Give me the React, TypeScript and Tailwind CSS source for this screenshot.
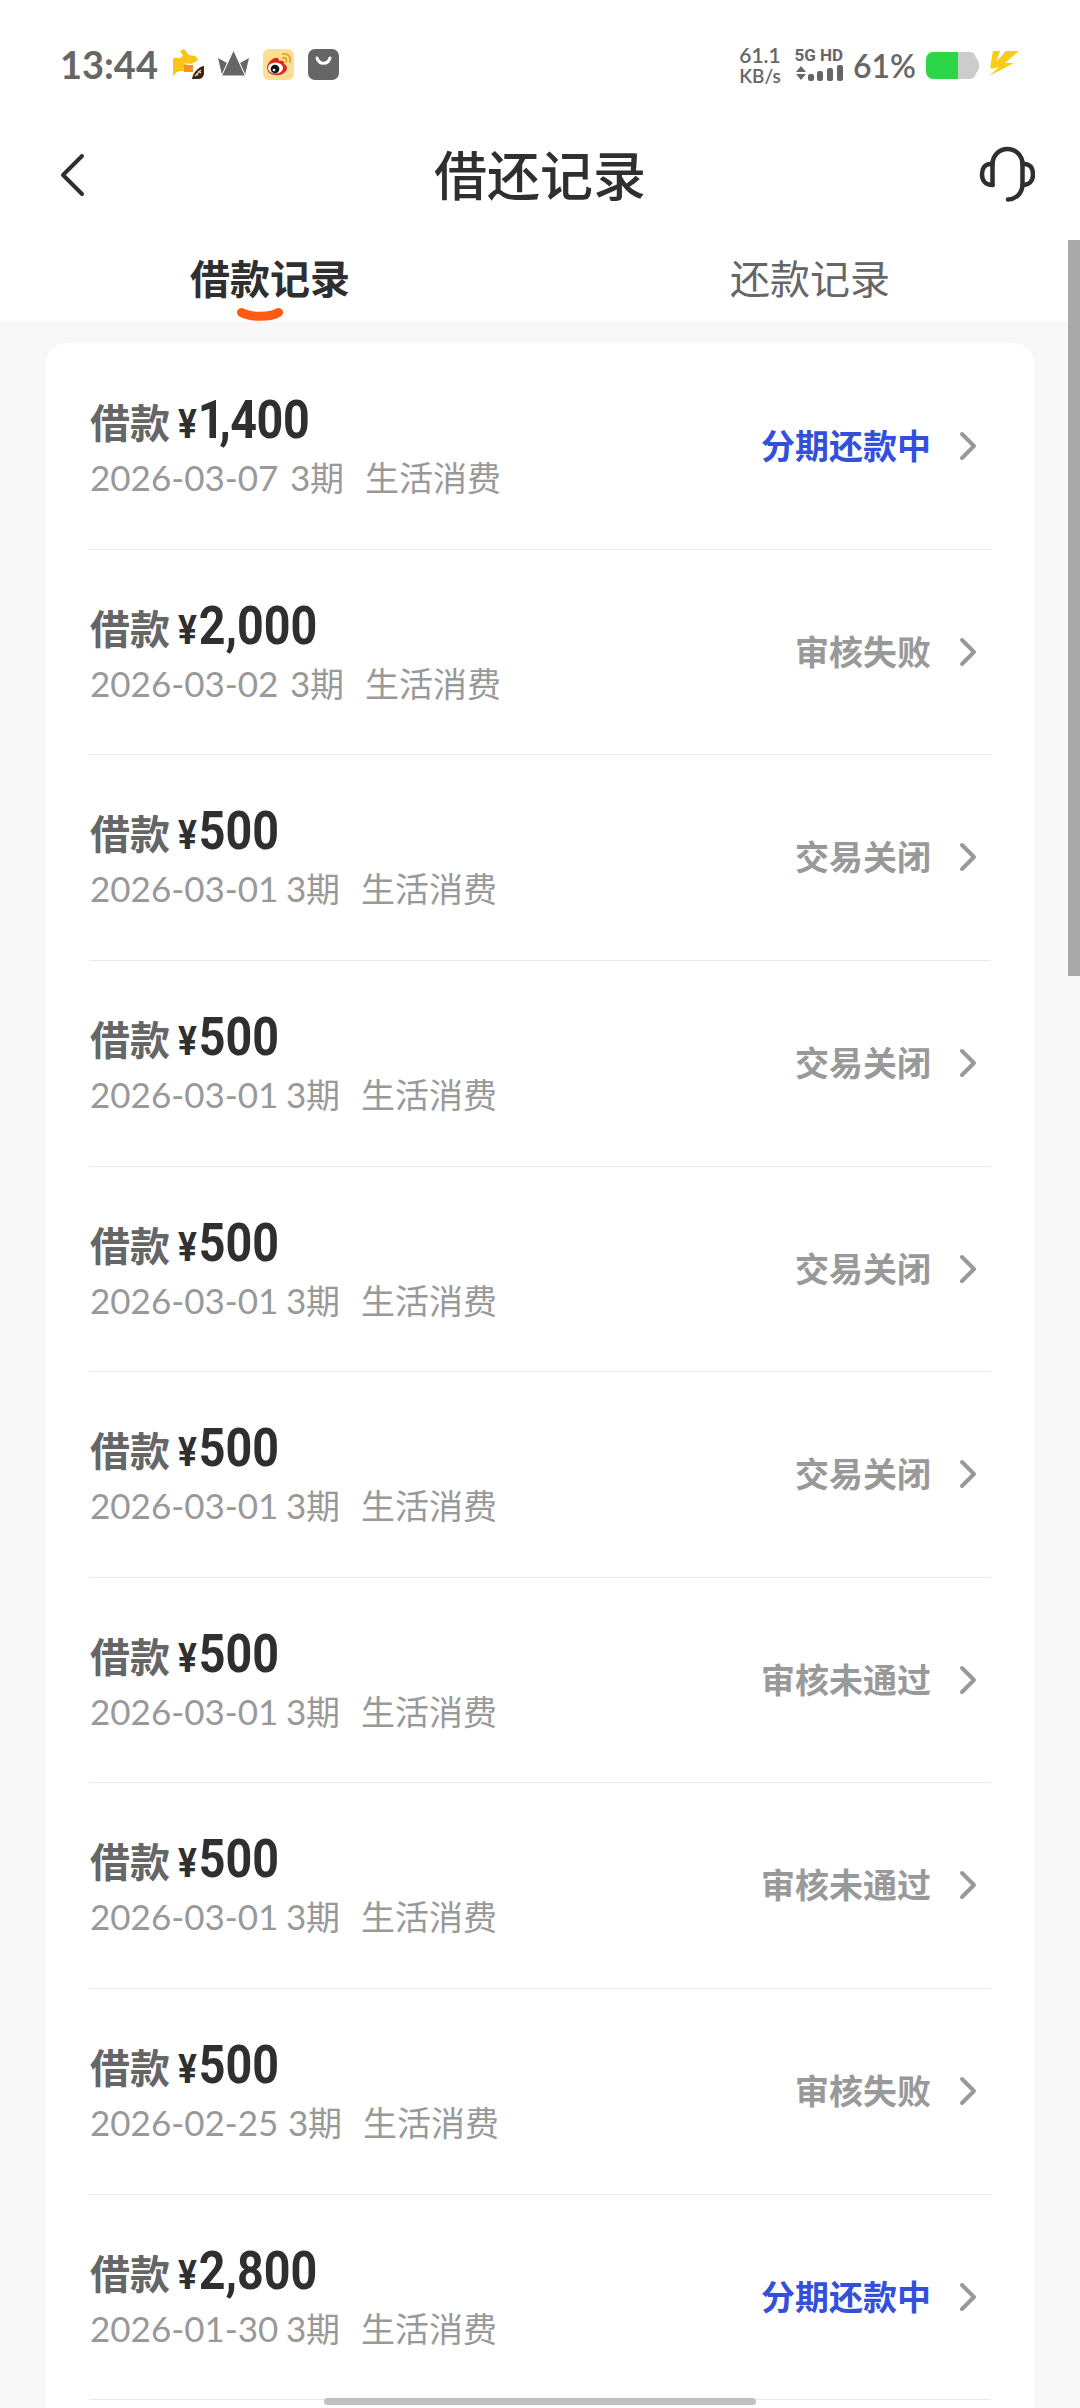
type LoanRecord = {
  amount: string;
  date: string;
  dateWidth: string;
  status: string;
  active?: boolean;
};

const records: LoanRecord[] = [
  { amount: "1,400", date: "2026-03-07", dateWidth: "w-[200px]", status: "分期还款中", active: true },
  { amount: "2,000", date: "2026-03-02", dateWidth: "w-[200px]", status: "审核失败" },
  { amount: "500", date: "2026-03-01", dateWidth: "w-[196px]", status: "交易关闭" },
  { amount: "500", date: "2026-03-01", dateWidth: "w-[196px]", status: "交易关闭" },
  { amount: "500", date: "2026-03-01", dateWidth: "w-[196px]", status: "交易关闭" },
  { amount: "500", date: "2026-03-01", dateWidth: "w-[196px]", status: "交易关闭" },
  { amount: "500", date: "2026-03-01", dateWidth: "w-[196px]", status: "审核未通过" },
  { amount: "500", date: "2026-03-01", dateWidth: "w-[196px]", status: "审核未通过" },
  { amount: "500", date: "2026-02-25", dateWidth: "w-[198px]", status: "审核失败" },
  { amount: "2,800", date: "2026-01-30", dateWidth: "w-[196px]", status: "分期还款中", active: true },
];

function StatusBar() {
  return (
    <div className="flex h-[130px] items-start justify-between bg-white pt-[42px] pr-[60px] pl-[60px] font-['Lato','Noto_Sans_CJK_SC',sans-serif] text-[#666]">
      <div className="flex h-11 items-center">
        <span className="w-[113px] text-[38px] leading-[44px] font-bold whitespace-nowrap">13:44</span>
        {/* delivery dog */}
        <svg width="31" height="31" viewBox="0 0 31 31">
          <path d="M0 9h7l3-2-3-5 4-2 5 6 6 1 3 3-1 2-6 3-7-1 4 2v6H8l-4 1-4 4z" fill="#fcc419" />
          <path d="M11 16h9v7h-9z" fill="#f9921e" />
          <path d="M31 17v8a6 6 0 0 1-6 5h-6c1-6 6-12 12-13z" fill="#3d2415" />
          <path d="M22 27l6-6M25 22l3 2M23 25l2 1" stroke="#e8c9a0" strokeWidth="1.4" />
        </svg>
        {/* crown */}
        <svg className="ml-[14px]" width="31" height="31" viewBox="0 0 31 31" fill="#666">
          <path d="M0 9l9 5-5 12zM31 9l-9 5 5 12z" />
          <path d="M15.500 1L27.500 27H3.500z" stroke="#fff" strokeWidth="1" />
        </svg>
        {/* weibo */}
        <svg className="ml-[14px]" width="31" height="31" viewBox="0 0 31 31">
          <rect width="31" height="31" rx="6" fill="#fddf94" />
          <path d="M4 18c1-5 7-10 10-9 2 0 2 2 2 3 3-1 6 0 5 3 4 2 4 6 0 9-5 4-17 3-17-6z" fill="#e1241c" />
          <ellipse cx="12.500" cy="19" rx="7.500" ry="5.500" fill="#fff" />
          <circle cx="12" cy="20" r="4.300" fill="#111" />
          <circle cx="11" cy="21" r="1.300" fill="#fff" />
          <path d="M20 9c3-1 4 1 3 4M20 5c6-1 8 4 7 8" fill="none" stroke="#f59c23" strokeWidth="1.900" strokeLinecap="round" />
        </svg>
        {/* shopping bag */}
        <svg className="ml-[14px]" width="31" height="31" viewBox="0 0 31 31">
          <rect width="31" height="31" rx="7" fill="#666" />
          <path d="M9 9c2 7 11 7 13 0" fill="none" stroke="#fff" strokeWidth="3" strokeLinecap="round" />
        </svg>
      </div>
      <div className="flex h-11 items-center">
        <div className="w-[46px] text-center font-semibold whitespace-nowrap">
          <div className="text-[21px] leading-[22px]">61.1</div>
          <div className="text-[19px] leading-[19px]">KB/s</div>
        </div>
        <div className="w-[60px]">
          <div className="text-right font-['Roboto'] text-[17px] leading-[17px] font-bold whitespace-nowrap">5G HD</div>
          <svg width="48" height="18" viewBox="0 0 48 18" fill="#666" className="ml-[12px]">
            <path d="M1 8l5-6 5 6zM1 10l5 6 5-6z" />
            <rect x="13" y="10" width="6" height="7" rx="2" />
            <rect x="22" y="7" width="6" height="10" rx="2" />
            <rect x="32" y="4" width="6" height="13" rx="2" />
            <rect x="42" y="1" width="6" height="16" rx="2" />
          </svg>
        </div>
        <span className="ml-[10px] w-[73px] pt-[4px] text-[32px] leading-[40px] font-semibold whitespace-nowrap">61%</span>
        <svg className="mt-[3px]" width="55" height="28" viewBox="0 0 55 28">
          <path d="M7 0h37a6 6 0 0 1 6 6c4 1 4 14 0 15a6 6 0 0 1-6 6H7z" fill="#ccc" />
          <path d="M32 0H7a7 7 0 0 0-7 7v13a7 7 0 0 0 7 7h25z" fill="#2bd748" />
        </svg>
        {/* fast charge bolt */}
        <svg className="ml-[7px]" width="32" height="26" viewBox="0 0 32 26" fill="#f8cd13">
          <path d="M5 0h7L8 11 18 0h13L17 12h9L1 25 11 16l-8 2z" />
          <path d="M5 0L2 17l6-6 4-11z" />
        </svg>
      </div>
    </div>
  );
}

function Header() {
  return (
    <header className="grid h-[90px] grid-cols-[1fr_auto_1fr] items-center bg-white pr-[45px] pl-[59px] text-[#2f2f2f]">
      <svg width="26" height="44" viewBox="0 0 26 44" fill="none">
        <path d="M23 3L4 22l19 19" stroke="currentColor" strokeWidth="4" strokeLinecap="round" strokeLinejoin="round" />
      </svg>
      <h1 className="pr-[14px] pb-[3px] text-[53px] leading-[87px] font-medium">借还记录</h1>
      <svg className="justify-self-end" width="56" height="58" viewBox="0 0 56 58" fill="none" stroke="currentColor" strokeWidth="4.500" strokeLinecap="round">
        <path d="M13.500 39V18a15 15 0 0 1 30 0v20c0 9-6 15-14.500 15.500" />
        <path d="M13.500 18C5 17 3 23 3 28.500S6 39 13.500 39" />
        <path d="M43.500 18C52 17 54 23 54 28.500S51 39 43.500 39" />
      </svg>
    </header>
  );
}

function Tabs() {
  return (
    <nav className="grid h-[101px] grid-cols-2 bg-white text-center text-[40px]">
      <div className="relative pt-[27px] leading-[60px] font-bold text-[#2f2f2f]">
        借款记录
        <svg className="absolute bottom-0 left-[236px]" width="48" height="13" viewBox="0 0 48 13">
          <path d="M5.500 4.500c9 5 28 5 37 0" fill="none" stroke="#ff5a12" strokeWidth="9" strokeLinecap="round" />
        </svg>
      </div>
      <div className="pt-[27px] leading-[60px] text-[#666]">还款记录</div>
    </nav>
  );
}

function Amount({ value }: { value: string }) {
  const narrow = value.startsWith("1");
  return (
    <span className="origin-left scale-x-[0.88] font-['Roboto'] text-[53px] font-bold whitespace-nowrap text-[#2f2f2f]">
      <span className="mr-[2px] text-[40px]">¥</span>
      {narrow && <span className="-ml-px tracking-[-6px]">1</span>}
      {narrow ? <span className="tracking-[-0.5px]">{value.slice(1)}</span> : value}
    </span>
  );
}

function RecordRow({ record }: { record: LoanRecord }) {
  return (
    <li className="flex h-[205.640px] items-start justify-between border-b border-[#e9e9e9]">
      <div className="pt-[47px] pl-px">
        <div className="flex h-[60px] items-baseline leading-[58px]">
          <span className="w-[88px] text-[40px] font-bold text-[#666]">借款</span>
          <Amount value={record.amount} />
        </div>
        <div className="flex h-[52px] items-baseline text-[34px] leading-[52px] whitespace-nowrap text-[#999]">
          <span className={`${record.dateWidth} font-['Lato'] text-[35px]`}>{record.date}</span>
          <span className="w-5 font-['Lato'] text-[35px]">3</span>
          <span className="w-[55px]">期</span>
          <span>生活消费</span>
        </div>
      </div>
      <div className="flex h-[204px] items-center pr-[14px]">
        <span className={`pb-[3px] text-[34px] font-bold ${record.active ? "text-[#3350dc]" : "text-[#999]"}`}>{record.status}</span>
        <svg className="ml-[28px]" width="18" height="30" viewBox="0 0 18 30" fill="none">
          <path d="M3 3l12 12L3 27" stroke="#999" strokeWidth="4" strokeLinecap="round" strokeLinejoin="round" />
        </svg>
      </div>
    </li>
  );
}

export default function App() {
  return (
    <div className="relative h-[2408px] w-[1080px] overflow-hidden bg-[#f8f8f8] font-['Noto_Sans_CJK_SC',sans-serif]">
      <StatusBar />
      <Header />
      <Tabs />
      <main className="mx-[46px] mt-[22px] rounded-t-[20px] bg-white px-[43px] pt-px pb-10">
        <ul>
          {records.map((record, i) => (
            <RecordRow key={i} record={record} />
          ))}
        </ul>
      </main>
      {/* scrollbar */}
      <div className="absolute top-[240px] right-0 h-[736px] w-3 bg-[#aaa]" />
      {/* home indicator */}
      <div className="absolute bottom-[3px] left-[324px] h-[7px] w-[432px] rounded-full bg-[#c0c0c0]" />
    </div>
  );
}
